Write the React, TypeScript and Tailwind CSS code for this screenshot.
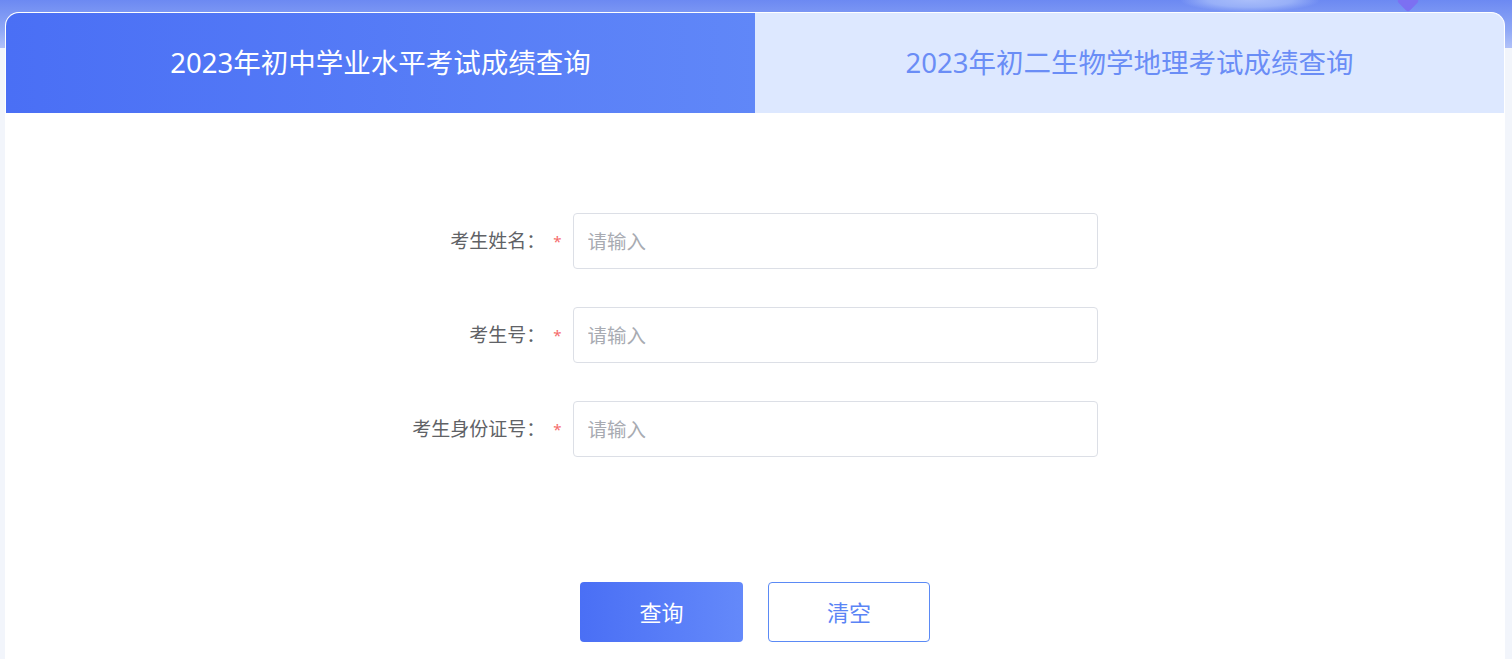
import React, { useState } from 'react';

const FONT = '"Noto Sans", "Noto Sans CJK SC", sans-serif';

interface Field {
    key: string;
    label: string;
}

const fields: Field[] = [
    { key: 'name', label: '考生姓名：' },
    { key: 'examNo', label: '考生号：' },
    { key: 'idCard', label: '考生身份证号：' },
];

const tabs = ['2023年初中学业水平考试成绩查询', '2023年初二生物学地理考试成绩查询'];

const App: React.FC = () => {
    const [active, setActive] = useState(0);
    const [values, setValues] = useState<{ [key: string]: string }>({});

    const handleClear = () => setValues({});

    return (
        <div
            className="min-h-screen w-full bg-[#f2f5fb] bg-[radial-gradient(ellipse_70px_12px_at_1250px_0px,#aabefa_0%,#98b0f8_60%,transparent_100%),linear-gradient(to_bottom,#6c89f2_0px,#8fa8f6_30px,#b1c2f9_48px,#f2f5fb_48px)] bg-no-repeat pl-[5px] pr-[7px] pt-[12px] overflow-hidden"
            style={{ fontFamily: FONT }}
        >
            <div className="relative">
                {/* little diamond from the banner behind the card */}
                <div className="absolute left-[1395px] top-[-19px] w-[16px] h-[16px] rotate-45 rounded-[3px] bg-[#7c70f2]" />
                <div className="relative bg-white rounded-t-[14px] border border-white border-b-0 overflow-hidden">
                    <div className="flex h-[100px]">
                        {tabs.map((tab, i) => (
                            <button
                                key={tab}
                                type="button"
                                onClick={() => setActive(i)}
                                className={
                                    i === active
                                        ? 'w-[749px] shrink-0 flex items-center justify-center bg-[linear-gradient(to_right,#4a6ff5,#6087f8)] text-white text-[27.5px]'
                                        : 'flex-1 flex items-center justify-center bg-[#dde8ff] text-[#6a8df6] text-[27.5px]'
                                }
                            >
                                {tab}
                            </button>
                        ))}
                    </div>

                    <div className="flex flex-col items-center pt-[100px] pb-[40px]">
                        <div className="w-[685px] flex flex-col gap-[38px]">
                            {fields.map(f => (
                                <div key={f.key} className="flex items-center">
                                    <label className="w-[160px] shrink-0 flex items-center justify-end whitespace-nowrap pr-[11px] text-[19px] text-[#606266]">
                                        <span>{f.label}</span>
                                        <span className="ml-[8px] text-[#f56c6c] text-[15px]">*</span>
                                    </label>
                                    <input
                                        value={values[f.key] ?? ''}
                                        onChange={e => setValues(prev => ({ ...prev, [f.key]: e.target.value }))}
                                        placeholder="请输入"
                                        className="w-[525px] h-[56px] border border-[#dcdfe6] rounded-[4px] px-[14px] text-[19.5px] text-[#606266] placeholder:text-[#a8abb2] outline-none focus:border-[#4a6ff5]"
                                    />
                                </div>
                            ))}
                        </div>

                        <div className="flex gap-[25px] mt-[125px]">
                            <button
                                type="button"
                                className="w-[163px] h-[60px] rounded-[4px] bg-[linear-gradient(to_right,#4a6ff5,#6489fa)] text-white text-[22px]"
                            >
                                查询
                            </button>
                            <button
                                type="button"
                                onClick={handleClear}
                                className="w-[162px] h-[60px] rounded-[4px] border border-[#5b8af5] bg-white text-[#5a84f5] text-[22px]"
                            >
                                清空
                            </button>
                        </div>
                    </div>
                </div>
            </div>
        </div>
    );
};

export default App;
